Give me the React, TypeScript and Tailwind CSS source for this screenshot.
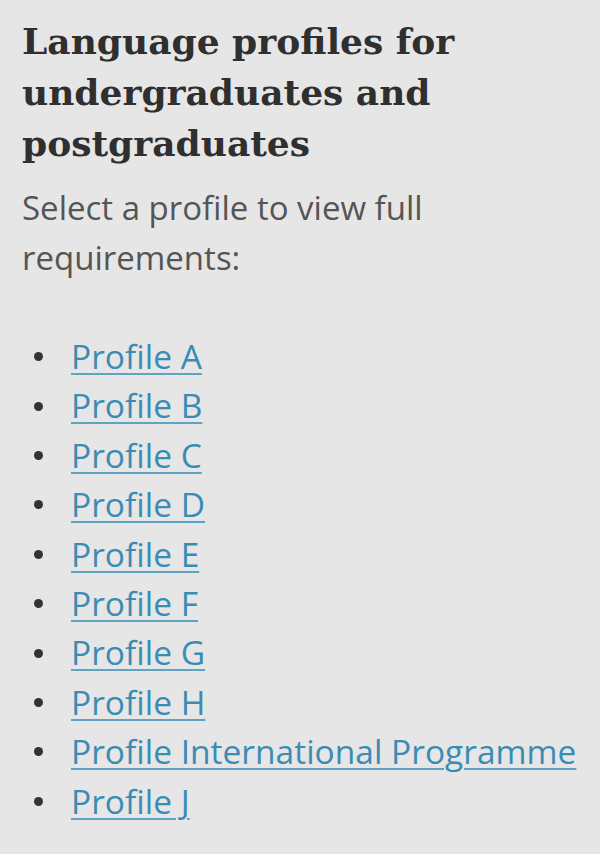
const PROFILES = [
  "Profile A",
  "Profile B",
  "Profile C",
  "Profile D",
  "Profile E",
  "Profile F",
  "Profile G",
  "Profile H",
  "Profile International Programme",
  "Profile J",
];

export default function App() {
  return (
    <div className="min-h-[854px] w-[600px] bg-[#e6e6e6] px-[22px] pt-[16px]">
      <h2 className="font-['DejaVu_Serif',serif] text-[36px] font-bold leading-[51px] text-[#2f2f2f]">
        Language profiles for undergraduates and postgraduates
      </h2>
      <p className="mt-[14px] font-['Open_Sans',sans-serif] text-[33px] leading-[50px] text-[#555]">
        Select a profile to view full requirements:
      </p>
      <ul className="mt-[49px] font-['Open_Sans',sans-serif] text-[33.5px] leading-[49.4px]">
        {PROFILES.map((name) => (
          <li key={name} className="flex items-center">
            <span className="ml-[12px] mr-[28px] h-[9px] w-[9px] rounded-full bg-[#333]" />
            <a
              href="#"
              className="text-[#3b8cb4] underline decoration-[#5ea3c4] decoration-[2px] underline-offset-[4px]"
            >
              {name}
            </a>
          </li>
        ))}
      </ul>
    </div>
  );
}
